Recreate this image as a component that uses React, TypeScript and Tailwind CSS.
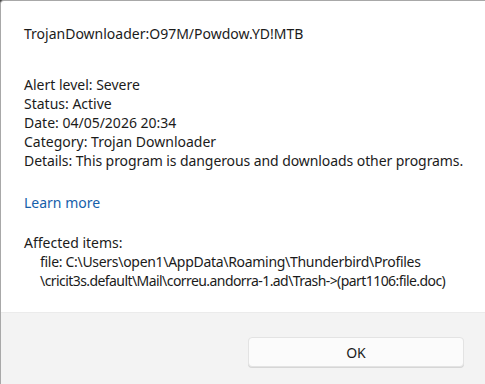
export default function App() {
  return (
    <div
      className="w-[485px] h-[384px] bg-[#4a4a4a] overflow-hidden"
      style={{ fontFamily: '"Noto Sans", "Open Sans", sans-serif' }}
    >
      <div className="w-[500px] h-[384px] flex flex-col bg-white border-l border-t border-[#a8a8a8] rounded-tl-[4px] overflow-hidden text-[#1b1b1b] text-[14px] leading-[19px]">
        <div className="flex-1 pl-[23px] pt-[23px]">
          <div>TrojanDownloader:O97M/Powdow.YD!MTB</div>
          <div className="mt-[32px]">
            <div>Alert level: Severe</div>
            <div>Status: Active</div>
            <div>Date: 04/05/2026 20:34</div>
            <div>Category: Trojan Downloader</div>
            <div className="tracking-[-0.08px]">Details: This program is dangerous and downloads other programs.</div>
          </div>
          <div className="mt-[23px] text-[#1660aa]">Learn more</div>
          <div className="mt-[21px]">
            <div>Affected items:</div>
            <div className="pl-[16px]">
              <div className="tracking-[-0.3px]">file: C:\Users\open1\AppData\Roaming\Thunderbird\Profiles</div>
              <div className="tracking-[-0.57px]">\cricit3s.default\Mail\correu.andorra-1.ad\Trash-&gt;(part1106:file.doc)</div>
            </div>
          </div>
        </div>
        <div className="h-[72px] bg-[#f3f3f3] border-t border-[#ebebeb] flex items-start pt-[24px] pl-[247px]">
          <button className="w-[216px] h-[30px] bg-[#fbfbfb] border border-[#e3e3e3] rounded-[4px] text-[#1b1b1b] text-[14px] shadow-[0_1px_0_#d6d6d6]">
            OK
          </button>
        </div>
      </div>
    </div>
  );
}
